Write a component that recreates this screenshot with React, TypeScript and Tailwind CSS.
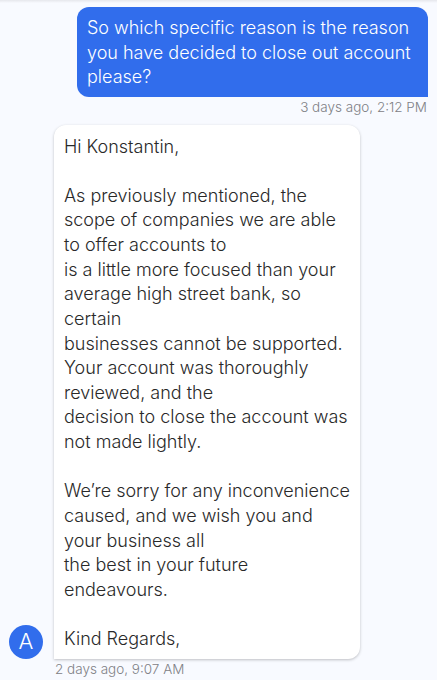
const question = [
  "So which specific reason is the reason",
  "you have decided to close out account",
  "please?",
];

const reply = [
  "Hi Konstantin,",
  "",
  "As previously mentioned, the",
  "scope of companies we are able",
  "to offer accounts to",
  "is a little more focused than your",
  "average high street bank, so",
  "certain",
  "businesses cannot be supported.",
  "Your account was thoroughly",
  "reviewed, and the",
  "decision to close the account was",
  "not made lightly.",
  "",
  "We’re sorry for any inconvenience",
  "caused, and we wish you and",
  "your business all",
  "the best in your future",
  "endeavours.",
  "",
  "Kind Regards,",
];

interface LinesProps {
  lines: string[];
}

const Lines = ({ lines }: LinesProps) => {
  return (
    <>
      {lines.map((line: string, index: number) => (
        <p key={index} className="h-[24.64px] whitespace-nowrap">{line}</p>
      ))}
    </>
  );
};

const App = () => {
  return (
    <div className="h-[680px] w-[437px] overflow-hidden bg-[#f8faff] font-[Inter,sans-serif] font-light">
      <div className="h-[3px] bg-linear-to-b from-[#e6e7ec] to-[#f8faff]"></div>

      <div className="mt-[4px] ml-[77px] h-[90px] w-[351px] rounded-xl rounded-br-none bg-[#316dec] pt-[9px] pl-[10px] text-[18px] leading-[24.64px] text-white">
        <Lines lines={question} />
      </div>
      <p className="mt-[2px] pr-[10px] text-right text-[13.5px] leading-[17px] text-[#7f8186]">3 days ago, 2:12 PM</p>

      <div className="mt-[9px] flex items-end">
        <div className="ml-[9px] flex size-[34px] items-center justify-center rounded-full bg-[#316dec] pb-px text-[22px] text-white">A</div>
        <div className="ml-[11px] h-[534px] w-[306px] rounded-xl rounded-bl-none bg-white pt-[9.6px] pl-[10px] text-[18px] leading-[24.64px] text-[#292929] shadow-[0_1px_3px_rgba(0,0,0,0.24)]">
          <Lines lines={reply} />
        </div>
      </div>
      <p className="mt-[2px] pl-[55px] text-[13.5px] leading-[17px] text-[#7f8186]">2 days ago, 9:07 AM</p>
    </div>
  );
};

export default App;
